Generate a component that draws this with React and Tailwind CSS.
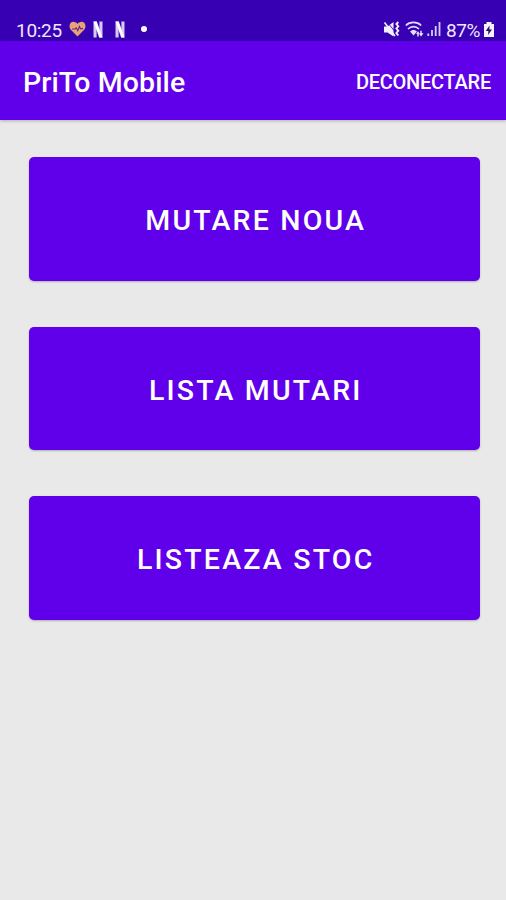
import React from 'react';

function HeartIcon() {
  return (
    <svg className="ml-[6px] h-[16px] w-[17px] shrink-0" viewBox="0 0 17 16">
      <path d="M8.5 15.5 L1.8 8.8 C-.8 5.5 .8 .8 4.4 .8 C6.3 .8 7.7 1.8 8.5 3 C9.3 1.8 10.7 .8 12.6 .8 C16.2 .8 17.8 5.5 15.2 8.8 Z" fill="#e9a274" />
      <path d="M3 8 H6 L7.2 6.8 L8.8 9.6 L10.4 5.4 L11.4 7.6 H14" fill="none" stroke="#5a2a90" strokeWidth="1.1" />
    </svg>
  );
}

function RibbonIcon({ className }) {
  return (
    <svg className={className} viewBox="0 0 10 17" preserveAspectRatio="none">
      <path d="M.5 .5 H3.6 V16.5 H.5 Z M6.4 .5 H9.5 V16.5 H6.4 Z" fill="#d6c9f4" />
      <path d="M.5 .5 H3.8 L9.5 16.5 H6.2 Z" fill="#fff" />
    </svg>
  );
}

function MutedIcon() {
  return (
    <svg className="h-[17px] w-[17px] shrink-0" viewBox="0 0 17 17">
      <path d="M1 5.5 H4.5 L10.5 1 V15.5 L4.5 11.5 H1 Z" fill="#f2edff" />
      <path d="M4.5 1.5 L11.5 10" stroke="#3700b3" strokeWidth=".9" />
      <path d="M1.5 1.5 L12 15" stroke="#f2edff" strokeWidth="1.6" />
      <path d="M15.3 1 L13.4 3 L15.3 5.2 L13.4 7.5 L15.3 9.8 L13.4 12 L15.3 14.5" fill="none" stroke="#f2edff" strokeWidth="1.9" />
    </svg>
  );
}

function WifiIcon() {
  return (
    <svg className="ml-[5px] h-[17px] w-[19px] shrink-0" viewBox="0 0 19 17">
      <g fill="none" stroke="#e4dcfc" strokeWidth="1.7">
        <path d="M.8 4.5 C5 .4 12 .4 16.2 4.5" />
        <path d="M3 8 C6.2 4.9 10.8 4.9 14 8" />
      </g>
      <path d="M5 10.5 C7 8.4 10 8.4 12 10.5 L8.5 14.5 Z" fill="#e4dcfc" />
      <path d="M11 13 L13 10.2 L14.5 12.6 H13.7 V15.5 H12.3 V12.8 Z M15.3 9.8 H16.7 V12.3 H18.5 L16 15.5 L14 12.5 H15.3 Z" fill="#f2edff" />
    </svg>
  );
}

function SignalIcon() {
  return (
    <svg className="ml-[3px] h-[16px] w-[14px] shrink-0" viewBox="0 0 14 16">
      <path d="M1.3 12.5 V15 M5 9 V15 M8.7 5 V15 M12.5 1 V15" stroke="#d8cdf8" strokeWidth="1.8" />
    </svg>
  );
}

function BatteryIcon() {
  return (
    <svg className="ml-[2px] h-[17px] w-[12px] shrink-0" viewBox="0 0 12 17">
      <path d="M3.5 1 H8.5 V3 H11 V16 H1 V3 H3.5 Z" fill="#f5f1ff" />
      <path d="M6.5 4.5 L2.8 10 H5.4 L5 14 L9 8.5 H6.4 Z" fill="#24105c" />
    </svg>
  );
}

function StatusBar() {
  return (
    <div className="flex h-[41px] items-start justify-between bg-[#3700b3] pr-[11px] pl-[16px] text-[19px] leading-[22px] text-[#eee8ff]">
      <div className="box-content flex h-[22px] items-center pt-[18px]">
        <span className="w-[47px] whitespace-nowrap pt-[3px] tracking-[-0.3px]">10:25</span>
        <HeartIcon />
        <RibbonIcon className="ml-[7px] h-[17px] w-[10px] shrink-0" />
        <RibbonIcon className="ml-[12px] h-[17px] w-[10px] shrink-0" />
        <span className="ml-[16px] size-[6px] rounded-full bg-white" />
      </div>
      <div className="box-content flex h-[22px] items-center pt-[18px]">
        <MutedIcon />
        <WifiIcon />
        <SignalIcon />
        <span className="ml-[5px] w-[35px] whitespace-nowrap pt-[3px] tracking-[-0.4px]">87%</span>
        <BatteryIcon />
      </div>
    </div>
  );
}

function ActionButton({ label }) {
  return (
    <button className="h-[123.5px] w-full rounded-[5px] bg-[#6000eb] pt-[6px] pl-[3px] text-[28.5px] font-medium tracking-[2.2px] text-white shadow-[0_1px_2px_rgba(0,0,0,0.25)]">
      {label}
    </button>
  );
}

export default function App() {
  return (
    <div className="flex h-[900px] w-[506px] flex-col overflow-hidden bg-[#e9e9e9] font-['Roboto',sans-serif]">
      <StatusBar />
      <header className="relative flex h-[79px] items-center justify-between bg-[#6000eb] pr-[15px] pl-[23px] text-white shadow-[0_1px_3px_rgba(0,0,0,0.25)]">
        <h1 className="pt-[5px] text-[28.5px] font-medium tracking-[0.1px]">PriTo Mobile</h1>
        <button className="pt-[3px] text-[20px] font-medium tracking-[-0.25px]">DECONECTARE</button>
      </header>
      <main className="flex flex-col gap-[46px] pt-[37px] pr-[26px] pl-[28.5px]">
        <ActionButton label="MUTARE NOUA" />
        <ActionButton label="LISTA MUTARI" />
        <ActionButton label="LISTEAZA STOC" />
      </main>
    </div>
  );
}
